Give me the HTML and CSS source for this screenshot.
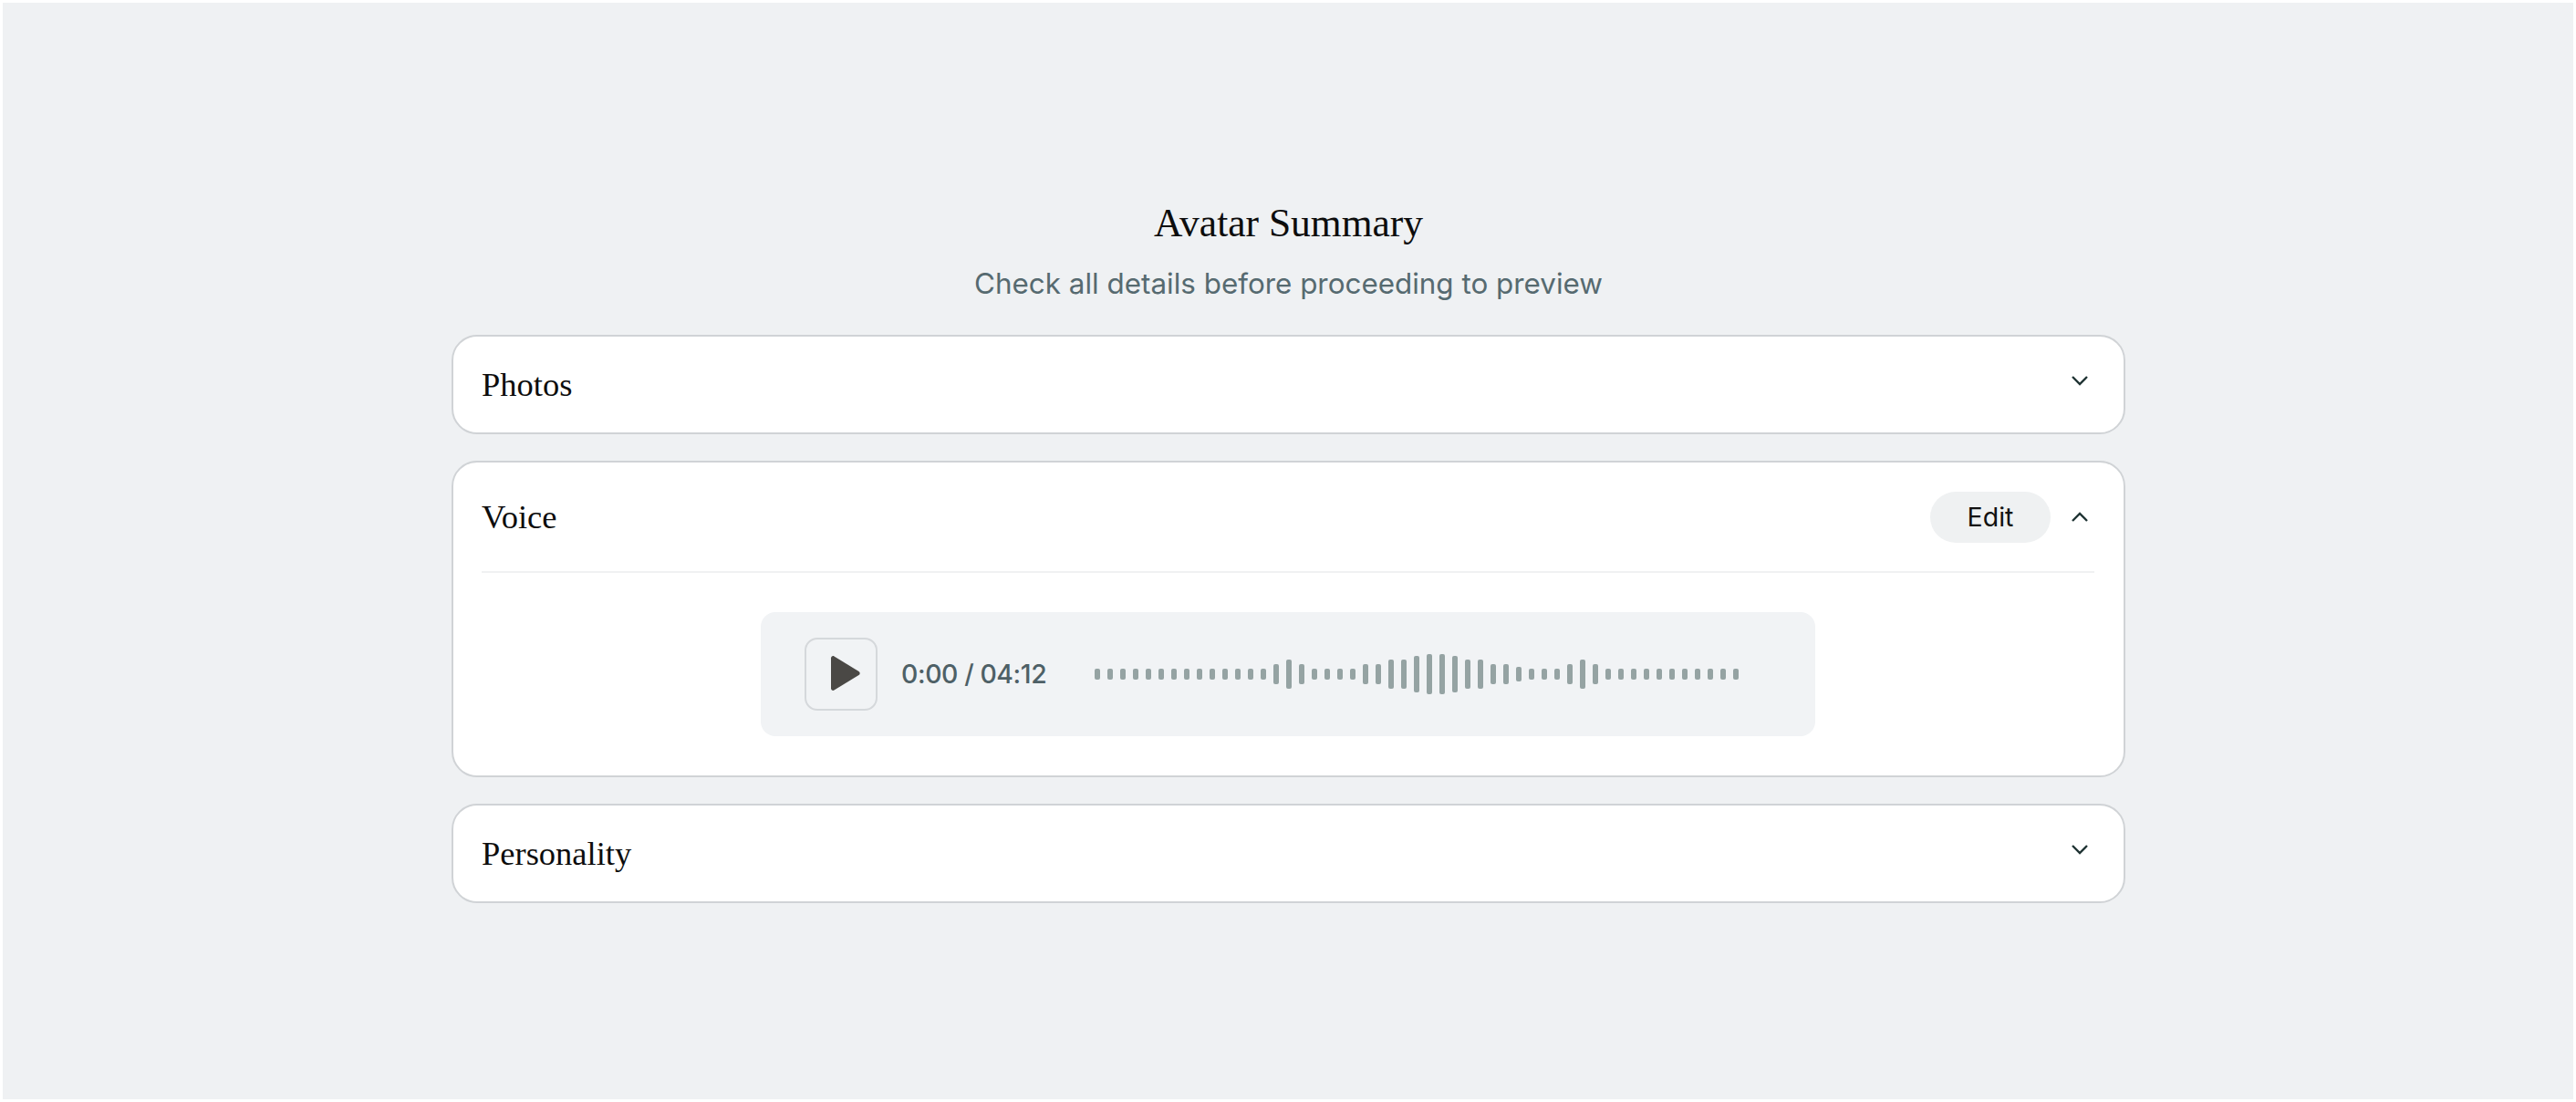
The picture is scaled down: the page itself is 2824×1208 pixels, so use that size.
FILE: index.html
```html
<!DOCTYPE html>
<html lang="en">
<head>
<meta charset="utf-8">
<title>Avatar Summary</title>
<link rel="stylesheet" href="styles.css">
</head>
<body>
<main class="page">
  <header class="intro">
    <h1 class="title">Avatar Summary</h1>
    <p class="subtitle">Check all details before proceeding to preview</p>
  </header>
  <section class="card">
    <div class="row row-closed">
      <h2 class="card-title">Photos</h2>
      <svg class="chevron chevron-raised" viewBox="0 0 20 12" aria-hidden="true"><path d="M2 2l8 8 8-8"/></svg>
    </div>
  </section>
  <section class="card">
    <div class="row row-open">
      <h2 class="card-title">Voice</h2>
      <div class="actions">
        <button class="edit" type="button">Edit</button>
        <svg class="chevron" viewBox="0 0 20 12" aria-hidden="true"><path d="M2 10l8-8 8 8"/></svg>
      </div>
    </div>
    <div class="body">
      <div class="player">
        <button class="play" type="button" aria-label="Play">
          <svg viewBox="0 0 36 42" aria-hidden="true"><path d="M3 3.5c0-2 2-3 3.500-2.100l27 16.500c1.600 1 1.600 3.200 0 4.200l-27 16.500C5 39.500 3 38.500 3 36.500z"/></svg>
        </button>
        <span class="time">0:00 / 04:12</span>
        <div class="wave" id="wave">
          <i class="bar h12"></i><i class="bar h12"></i><i class="bar h12"></i><i class="bar h12"></i><i class="bar h12"></i><i class="bar h12"></i><i class="bar h12"></i><i class="bar h12"></i><i class="bar h12"></i><i class="bar h12"></i><i class="bar h12"></i><i class="bar h12"></i><i class="bar h12"></i><i class="bar h12"></i>
          <i class="bar h22"></i><i class="bar h32"></i><i class="bar h22"></i>
          <i class="bar h12"></i><i class="bar h12"></i><i class="bar h12"></i><i class="bar h12"></i>
          <i class="bar h22"></i><i class="bar h22"></i><i class="bar h32"></i><i class="bar h32"></i><i class="bar h40"></i>
          <i class="bar h44"></i><i class="bar h44"></i><i class="bar h40"></i><i class="bar h32"></i><i class="bar h32"></i><i class="bar h22"></i><i class="bar h22"></i><i class="bar h16"></i>
          <i class="bar h12"></i><i class="bar h12"></i><i class="bar h12"></i>
          <i class="bar h22"></i><i class="bar h32"></i><i class="bar h22"></i>
          <i class="bar h12"></i><i class="bar h12"></i><i class="bar h12"></i><i class="bar h12"></i><i class="bar h12"></i><i class="bar h12"></i><i class="bar h12"></i><i class="bar h12"></i><i class="bar h12"></i><i class="bar h12"></i><i class="bar h12"></i>
        </div>
      </div>
    </div>
  </section>
  <section class="card">
    <div class="row row-closed">
      <h2 class="card-title">Personality</h2>
      <svg class="chevron chevron-raised" viewBox="0 0 20 12" aria-hidden="true"><path d="M2 2l8 8 8-8"/></svg>
    </div>
  </section>
</main>
</body>
</html>
```
FILE: styles.css
```css
* { box-sizing: border-box; }
html, body { margin: 0; height: 100%; background: #fff; }
body { padding: 3px; overflow: hidden; }
.page {
  height: 100%;
  background: #eff1f3;
  padding: 213px 491px 0 492px;
  display: flex;
  flex-direction: column;
  gap: 29px;
}
.intro { text-align: center; margin-bottom: 4px; }
.title {
  margin: 0;
  font: 400 43.5px/56px "Liberation Serif", serif;
  color: #0d0d0d;
}
.subtitle {
  margin: 16px 0 0;
  font: 400 31.4px/46px Inter, sans-serif;
  color: #566a70;
}
.card {
  background: #fff;
  border: 2px solid #d0d3d6;
  border-radius: 28px;
  padding: 0 32px 0 31px;
}
.row { display: flex; justify-content: space-between; align-items: center; }
.row-closed { height: 105px; }
.row-open { height: 121px; border-bottom: 2px solid #f0f1f2; }
.card-title {
  margin: 0;
  font: 400 36.5px/44px "Liberation Serif", serif;
  color: #0d0d0d;
}
.actions { display: flex; align-items: center; gap: 22px; }
.edit {
  width: 132px;
  height: 56px;
  border: 0;
  padding: 0;
  border-radius: 28px;
  background: #eff1f2;
  font: 400 28.5px/56px Inter, sans-serif;
  color: #111;
}
.chevron {
  display: block;
  width: 20px;
  height: 12px;
  margin-right: 6px;
  fill: none;
  stroke: #1f3333;
  stroke-width: 2.4;
}
.chevron-raised { margin-bottom: 10px; }
.body { display: flex; justify-content: center; padding: 43px 0; }
.player {
  width: 1156px;
  height: 136px;
  background: #f1f3f5;
  border-radius: 16px;
  padding: 0 48px;
  display: flex;
  align-items: center;
}
.play {
  width: 80px;
  height: 80px;
  flex: none;
  padding: 0 0 0 24px;
  border: 2px solid #d5d8db;
  border-radius: 14px;
  background: transparent;
  display: flex;
  align-items: center;
}
.play svg { width: 36px; height: 42px; fill: #4a4845; display: block; }
.time {
  margin-left: 26px;
  font: 500 28.4px/40px Inter, sans-serif;
  letter-spacing: -0.4px;
  color: #4e6066;
  white-space: nowrap;
}
.wave { margin-left: 53px; display: flex; align-items: center; gap: 8px; }
.bar { display: block; width: 6px; border-radius: 2px; background: #95a3a3; }
.h12 { height: 12px; }
.h16 { height: 16px; }
.h22 { height: 22px; }
.h32 { height: 32px; }
.h40 { height: 40px; }
.h44 { height: 44px; }
```
